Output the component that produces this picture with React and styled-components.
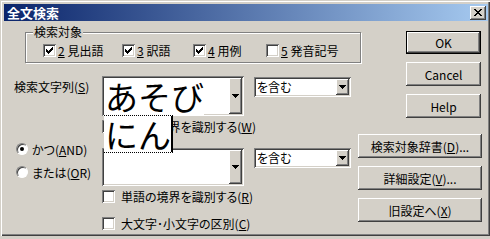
import React from "react";
import styled, { createGlobalStyle } from "styled-components";

const FACE = "#d4d0c8";
const raised = `box-shadow: inset -1px -1px #404040, inset 1px 1px #ffffff, inset -2px -2px #808080, inset 2px 2px ${FACE};`;
const sunken = `box-shadow: inset 1px 1px #808080, inset -1px -1px #ffffff, inset 2px 2px #404040, inset -2px -2px ${FACE};`;

const Global = createGlobalStyle`
  html, body { margin: 0; padding: 0; background: ${FACE}; }
  body {
    width: 490px; height: 239px; overflow: hidden;
    font-family: "Noto Sans CJK JP", "Noto Sans", sans-serif;
    font-size: 12px; color: #000;
    font-feature-settings: "palt";
  }
`;

const Window = styled.div`
  box-sizing: border-box;
  width: 490px;
  height: 236px;
  padding: 4px 2px 0 4px;
  background: ${FACE};
  box-shadow: inset 1px 1px ${FACE}, inset 2px 2px #fff, inset -1px -1px #404040, inset -2px -2px #808080;
  display: flex;
  flex-direction: column;
`;

const TitleBar = styled.div`
  height: 17px;
  flex: none;
  display: flex;
  align-items: center;
  justify-content: space-between;
  padding: 0 2px 0 3px;
  background: linear-gradient(to right, #0a246a, #a6caf0);
`;

const Title = styled.span`
  color: #fff;
  font-weight: bold;
  font-size: 13px;
  line-height: 17px;
`;

const CloseButton = styled.div`
  width: 16px;
  height: 14px;
  box-sizing: border-box;
  background: ${FACE};
  ${raised}
  display: flex;
  align-items: center;
  justify-content: center;
  padding-right: 1px;
`;

const Body = styled.div`
  display: grid;
  grid-template-columns: 354px 1fr;
  flex: 1;
`;

const LeftPanel = styled.div`
  display: flex;
  flex-direction: column;
`;

const RightPanel = styled.div`
  display: flex;
  flex-direction: column;
  align-items: flex-end;
  padding: 10px 6px 0 0;
`;

const GroupBox = styled.div`
  position: relative;
  margin: 11px -3px 0 21px;
  height: 31px;
  box-sizing: border-box;
  border: 1px solid #808080;
  box-shadow: inset 1px 1px #fff, 1px 1px #fff;
  padding: 11px 0 0 17px;
  display: flex;
`;

const Legend = styled.span`
  position: absolute;
  left: 7px;
  top: -8px;
  padding: 0 1px;
  background: ${FACE};
  line-height: 14px;
`;

const CheckItem = styled.div`
  display: flex;
  align-items: center;
  gap: ${(p) => p.$gap}px;
  width: ${(p) => (p.$w ? `${p.$w}px` : "auto")};
  height: 13px;
  line-height: 13px;
  white-space: nowrap;
  flex: none;
`;

const Box = styled.span`
  width: 13px;
  height: 13px;
  box-sizing: border-box;
  background: #fff;
  ${sunken}
  display: flex;
  align-items: center;
  justify-content: center;
  flex: none;
`;

const Key = styled.u`
  text-decoration: underline;
  text-underline-offset: 1px;
`;

const SearchGrid = styled.div`
  display: grid;
  grid-template-columns: 88px 142px 97px;
  column-gap: 10px;
  align-items: start;
  margin-top: 13px;
`;

const FieldLabel = styled.div`
  padding-left: 10px;
  margin-top: 4px;
  line-height: 14px;
  white-space: nowrap;
`;

const Combo = styled.div`
  position: relative;
  grid-column: 2;
  height: ${(p) => p.$h}px;
  margin-top: ${(p) => p.$mt || 0}px;
  box-sizing: border-box;
  background: #fff;
  ${sunken}
  padding: 2px;
  display: flex;
`;

const ComboText = styled.div`
  flex: 1;
  padding-left: 1px;
  line-height: 16px;
  white-space: nowrap;
  overflow: hidden;
`;

const DropButton = styled.span`
  width: ${(p) => p.$w}px;
  flex: none;
  background: ${FACE};
  ${raised}
  display: flex;
  align-items: center;
  justify-content: center;
`;

const OpCombo = styled(Combo)`
  grid-column: 3;
`;

const GridCheck = styled.div`
  grid-column: 2;
  margin-top: ${(p) => p.$mt}px;
`;

const RadioGroup = styled.div`
  grid-column: 1;
  grid-row: span 3;
  margin-top: 9px;
  padding-left: 12px;
  display: flex;
  flex-direction: column;
  gap: 9px;
`;

const RadioItem = styled.div`
  display: flex;
  align-items: center;
  gap: 4px;
  height: 14px;
  white-space: nowrap;
`;

const RadioCircle = styled.span`
  width: 12px;
  height: 12px;
  box-sizing: border-box;
  border-radius: 50%;
  background: #fff;
  border: 1px solid;
  border-color: #808080 #fff #fff #808080;
  box-shadow: inset 1px 1px #404040;
  display: flex;
  align-items: center;
  justify-content: center;
  flex: none;
`;

const Dot = styled.span`
  width: 4px;
  height: 4px;
  border-radius: 50%;
  background: #000;
`;

const ImeWindow = styled.div`
  position: absolute;
  left: 2px;
  top: 2px;
  z-index: 2;
  display: flex;
  flex-direction: column;
  align-items: flex-start;
  font-size: 33px;
  font-feature-settings: normal;
`;

const ImeLine = styled.div`
  background: #fff;
  padding-left: 1px;
  height: ${(p) => p.$h}px;
  line-height: ${(p) => p.$h}px;
  white-space: nowrap;
  ${(p) =>
    p.$boxed &&
    `border-top: 1px dotted #000; border-bottom: 1px dotted #000; border-right: 2px solid #000;`}
`;

const Button = styled.button`
  box-sizing: border-box;
  width: ${(p) => p.$w}px;
  height: ${(p) => p.$h}px;
  margin-top: ${(p) => p.$mt}px;
  margin-right: ${(p) => p.$mr || 0}px;
  padding: 0;
  font: inherit;
  color: #000;
  background: ${FACE};
  border: ${(p) => (p.$default ? "1px solid #000" : "none")};
  ${raised}
  display: flex;
  align-items: center;
  justify-content: center;
  white-space: nowrap;
  flex: none;
`;

const CheckMark = () => (
  <svg width="7" height="7" viewBox="0 0 7 7" shapeRendering="crispEdges">
    <rect x="6" y="0" width="1" height="1" />
    <rect x="5" y="1" width="2" height="1" />
    <rect x="0" y="2" width="1" height="1" />
    <rect x="4" y="2" width="3" height="1" />
    <rect x="0" y="3" width="2" height="1" />
    <rect x="3" y="3" width="3" height="1" />
    <rect x="0" y="4" width="5" height="1" />
    <rect x="1" y="5" width="3" height="1" />
    <rect x="2" y="6" width="1" height="1" />
  </svg>
);

const DownArrow = () => (
  <svg width="7" height="4" viewBox="0 0 7 4" shapeRendering="crispEdges">
    <rect x="0" y="0" width="7" height="1" />
    <rect x="1" y="1" width="5" height="1" />
    <rect x="2" y="2" width="3" height="1" />
    <rect x="3" y="3" width="1" height="1" />
  </svg>
);

const CloseGlyph = () => (
  <svg width="8" height="7" viewBox="0 0 8 7" shapeRendering="crispEdges">
    <rect x="0" y="0" width="2" height="1" />
    <rect x="6" y="0" width="2" height="1" />
    <rect x="1" y="1" width="2" height="1" />
    <rect x="5" y="1" width="2" height="1" />
    <rect x="2" y="2" width="4" height="1" />
    <rect x="3" y="3" width="2" height="1" />
    <rect x="2" y="4" width="4" height="1" />
    <rect x="1" y="5" width="2" height="1" />
    <rect x="5" y="5" width="2" height="1" />
    <rect x="0" y="6" width="2" height="1" />
    <rect x="6" y="6" width="2" height="1" />
  </svg>
);

const Check = ({ checked, w, gap, children }) => (
  <CheckItem $w={w} $gap={gap}>
    <Box>{checked && <CheckMark />}</Box>
    <span>{children}</span>
  </CheckItem>
);

const Radio = ({ checked, children }) => (
  <RadioItem>
    <RadioCircle>{checked && <Dot />}</RadioCircle>
    <span>{children}</span>
  </RadioItem>
);

const targets = [
  { k: "2", label: "見出語", checked: true, w: 79 },
  { k: "3", label: "訳語", checked: true, w: 71 },
  { k: "4", label: "用例", checked: true, w: 73 },
  { k: "5", label: "発音記号", checked: false },
];

export default function App() {
  return (
    <>
      <Global />
      <Window>
        <TitleBar>
          <Title>全文検索</Title>
          <CloseButton>
            <CloseGlyph />
          </CloseButton>
        </TitleBar>
        <Body>
          <LeftPanel>
            <GroupBox>
              <Legend>検索対象</Legend>
              {targets.map((t) => (
                <Check key={t.k} checked={t.checked} w={t.w} gap={2}>
                  <Key>{t.k}</Key> {t.label}
                </Check>
              ))}
            </GroupBox>
            <SearchGrid>
              <FieldLabel>
                検索文字列(<Key>S</Key>)
              </FieldLabel>
              <Combo $h={40}>
                <ComboText />
                <DropButton $w={13}>
                  <DownArrow />
                </DropButton>
                <ImeWindow>
                  <ImeLine $h={37}>あそび</ImeLine>
                  <ImeLine $h={36} $boxed>
                    にん
                  </ImeLine>
                </ImeWindow>
              </Combo>
              <OpCombo $h={20} $mt={1}>
                <ComboText>を含む</ComboText>
                <DropButton $w={13}>
                  <DownArrow />
                </DropButton>
              </OpCombo>

              <GridCheck $mt={4}>
                <Check gap={6}>
                  単語の境界を識別する(<Key>W</Key>)
                </Check>
              </GridCheck>

              <RadioGroup>
                <Radio checked>
                  かつ(<Key>A</Key>ND)
                </Radio>
                <Radio>
                  または(<Key>O</Key>R)
                </Radio>
              </RadioGroup>
              <Combo $h={38} $mt={15}>
                <ComboText />
                <DropButton $w={13}>
                  <DownArrow />
                </DropButton>
              </Combo>
              <OpCombo $h={20} $mt={15}>
                <ComboText>を含む</ComboText>
                <DropButton $w={13}>
                  <DownArrow />
                </DropButton>
              </OpCombo>

              <GridCheck $mt={4}>
                <Check gap={6}>
                  単語の境界を識別する(<Key>R</Key>)
                </Check>
              </GridCheck>
              <GridCheck $mt={14}>
                <Check gap={6}>
                  大文字･小文字の区別(<Key>C</Key>)
                </Check>
              </GridCheck>
            </SearchGrid>
          </LeftPanel>
          <RightPanel>
            <Button $default $w={75} $h={23} $mt={0} $mr={1}>
              OK
            </Button>
            <Button $w={75} $h={24} $mt={8} $mr={1}>
              Cancel
            </Button>
            <Button $w={75} $h={24} $mt={8} $mr={1}>
              Help
            </Button>
            <Button $w={124} $h={24} $mt={16}>
              検索対象辞書(<Key>D</Key>)...
            </Button>
            <Button $w={124} $h={24} $mt={8}>
              詳細設定(<Key>V</Key>)...
            </Button>
            <Button $w={124} $h={24} $mt={8}>
              旧設定へ(<Key>X</Key>)
            </Button>
          </RightPanel>
        </Body>
      </Window>
    </>
  );
}
